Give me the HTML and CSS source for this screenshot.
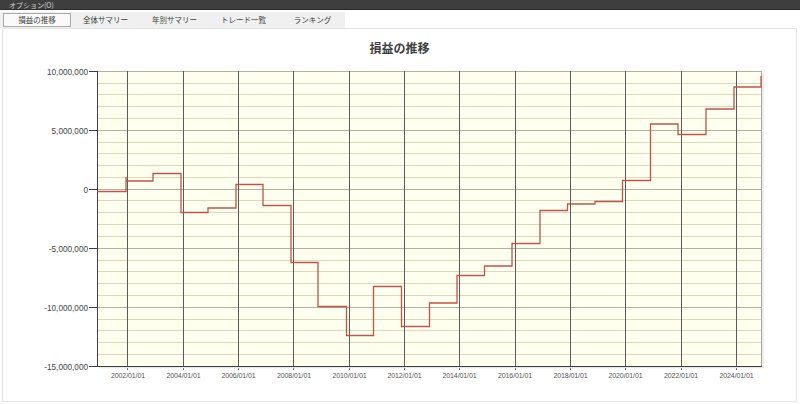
FILE: index.html
```html
<!DOCTYPE html>
<html lang="ja">
<head>
<meta charset="utf-8">
<link rel="stylesheet" href="styles.css">
</head>
<body>
<div class="menubar">オプション(O)</div>
<div class="tabs">
  <div class="tab active">損益の推移</div>
  <div class="tab">全体サマリー</div>
  <div class="tab">年別サマリー</div>
  <div class="tab">トレード一覧</div>
  <div class="tab">ランキング</div>
</div>
<div class="panel">
  <div class="title">損益の推移</div>
  <svg class="chart" width="793" height="346" viewBox="3 55 793 346" xmlns="http://www.w3.org/2000/svg">
    <rect x="97" y="71" width="665" height="295" fill="#fffff0"/>
    <g stroke="#ddd7bb" stroke-width="1">
      <line x1="97" x2="762" y1="83.5" y2="83.5"/>
      <line x1="97" x2="762" y1="94.5" y2="94.5"/>
      <line x1="97" x2="762" y1="106.5" y2="106.5"/>
      <line x1="97" x2="762" y1="118.5" y2="118.5"/>
      <line x1="97" x2="762" y1="142.5" y2="142.5"/>
      <line x1="97" x2="762" y1="153.5" y2="153.5"/>
      <line x1="97" x2="762" y1="165.5" y2="165.5"/>
      <line x1="97" x2="762" y1="177.5" y2="177.5"/>
      <line x1="97" x2="762" y1="200.5" y2="200.5"/>
      <line x1="97" x2="762" y1="212.5" y2="212.5"/>
      <line x1="97" x2="762" y1="224.5" y2="224.5"/>
      <line x1="97" x2="762" y1="236.5" y2="236.5"/>
      <line x1="97" x2="762" y1="260.5" y2="260.5"/>
      <line x1="97" x2="762" y1="271.5" y2="271.5"/>
      <line x1="97" x2="762" y1="283.5" y2="283.5"/>
      <line x1="97" x2="762" y1="295.5" y2="295.5"/>
      <line x1="97" x2="762" y1="319.5" y2="319.5"/>
      <line x1="97" x2="762" y1="330.5" y2="330.5"/>
      <line x1="97" x2="762" y1="342.5" y2="342.5"/>
      <line x1="97" x2="762" y1="354.5" y2="354.5"/>
    </g>
    <g stroke="#b4b0a0" stroke-width="1">
      <line x1="97" x2="762" y1="71.5" y2="71.5"/>
      <line x1="97" x2="762" y1="130.5" y2="130.5"/>
      <line x1="97" x2="762" y1="189.5" y2="189.5"/>
      <line x1="97" x2="762" y1="248.5" y2="248.5"/>
      <line x1="97" x2="762" y1="307.5" y2="307.5"/>
    </g>
    <g stroke="#5a5a5a" stroke-width="1">
      <line y1="71" y2="370" x1="127.5" x2="127.5"/>
      <line y1="71" y2="370" x1="183.5" x2="183.5"/>
      <line y1="71" y2="370" x1="238.5" x2="238.5"/>
      <line y1="71" y2="370" x1="293.5" x2="293.5"/>
      <line y1="71" y2="370" x1="349.5" x2="349.5"/>
      <line y1="71" y2="370" x1="404.5" x2="404.5"/>
      <line y1="71" y2="370" x1="459.5" x2="459.5"/>
      <line y1="71" y2="370" x1="515.5" x2="515.5"/>
      <line y1="71" y2="370" x1="570.5" x2="570.5"/>
      <line y1="71" y2="370" x1="625.5" x2="625.5"/>
      <line y1="71" y2="370" x1="681.5" x2="681.5"/>
      <line y1="71" y2="370" x1="736.5" x2="736.5"/>
    </g>
    <line x1="761.5" x2="761.5" y1="71" y2="366" stroke="#a8a8a8" stroke-width="1"/>
    <line x1="763" x2="763" y1="73" y2="368" stroke="#e6e6e6" stroke-width="1.5"/>
    <line x1="99" x2="763" y1="367.5" y2="367.5" stroke="#e6e6e6" stroke-width="1.5"/>
    <g stroke="#404040" stroke-width="1">
      <line x1="97.5" x2="97.5" y1="71" y2="366.5"/>
      <line x1="97" x2="762" y1="366.5" y2="366.5"/>
      <line x1="89" x2="97" y1="71.5" y2="71.5"/>
      <line x1="89" x2="97" y1="130.5" y2="130.5"/>
      <line x1="89" x2="97" y1="189.5" y2="189.5"/>
      <line x1="89" x2="97" y1="248.5" y2="248.5"/>
      <line x1="89" x2="97" y1="307.5" y2="307.5"/>
      <line x1="89" x2="97" y1="366.5" y2="366.5"/>
    </g>
    <path d="M97 191.5 H126 V177 V181 H153 V173.5 H181 V212.5 H208 V208 H236 V184.5 H263 V205.5 H291 V262.5 H318 V306.5 H346.5 V335.5 H373.5 V286.5 H401.5 V326.5 H429.5 V303 H457 V275.5 H484.5 V266 H512 V243.5 H540 V210.5 H567.5 V204 H595 V201.5 H622.5 V180.5 H650.5 V124 H678 V134.5 H706 V109 H734 V87 H761 V76" fill="none" stroke="#c0534e" stroke-width="1.3"/>
    <g class="ylab" text-anchor="end">
      <text x="88" y="74.5">10,000,000</text>
      <text x="88" y="133.5">5,000,000</text>
      <text x="88" y="192.5">0</text>
      <text x="88" y="251.5">-5,000,000</text>
      <text x="88" y="310.5">-10,000,000</text>
      <text x="88" y="369.5">-15,000,000</text>
    </g>
    <g class="xlab" text-anchor="middle">
      <text x="128" y="377.5">2002/01/01</text>
      <text x="183.5" y="377.5">2004/01/01</text>
      <text x="238.5" y="377.5">2006/01/01</text>
      <text x="294" y="377.5">2008/01/01</text>
      <text x="349.5" y="377.5">2010/01/01</text>
      <text x="404.5" y="377.5">2012/01/01</text>
      <text x="459.5" y="377.5">2014/01/01</text>
      <text x="515" y="377.5">2016/01/01</text>
      <text x="570.5" y="377.5">2018/01/01</text>
      <text x="625.5" y="377.5">2020/01/01</text>
      <text x="681" y="377.5">2022/01/01</text>
      <text x="736.5" y="377.5">2024/01/01</text>
    </g>
  </svg>
</div>
</body>
</html>
```
FILE: styles.css
```css
html, body {
  margin: 0;
  padding: 0;
  background: #ffffff;
}
body {
  width: 800px;
  height: 404px;
  overflow: hidden;
  font-family: "Noto Sans CJK JP", "Liberation Sans", sans-serif;
  color: #333333;
}
.menubar {
  height: 10px;
  background: #3e3e3e;
  color: #d4d4d4;
  font-size: 7px;
  line-height: 10px;
  padding-left: 9px;
  border-bottom: 1px solid #2c2c2c;
  box-sizing: border-box;
}
.tabs {
  display: flex;
  width: 345px;
  height: 16px;
  margin-top: 2px;
  background: #f0f0f0;
  box-sizing: border-box;
}
.tab {
  width: 69px;
  text-align: center;
  font-size: 7.5px;
  line-height: 16px;
  color: #3a3a3a;
  flex: none;
}
.tab.active {
  width: 68px;
  margin-left: 3px;
  margin-top: 1px;
  height: 14px;
  line-height: 12px;
  background: #fafafa;
  border: 1px solid #a9a9a9;
  box-sizing: border-box;
}
.panel {
  margin: 0 3px 0 2px;
  height: 374px;
  border: 1px solid #e4e4e4;
  box-sizing: border-box;
}
.title {
  padding-top: 12px;
  height: 14px;
  line-height: 14px;
  text-align: center;
  font-size: 12px;
  font-weight: bold;
  color: #404040;
}
.chart {
  display: block;
}
.ylab {
  font-family: "Liberation Sans", sans-serif;
  font-size: 8.2px;
  fill: #444444;
}
.xlab {
  font-family: "Liberation Sans", sans-serif;
  font-size: 7px;
  letter-spacing: -0.1px;
  fill: #555555;
}
```
